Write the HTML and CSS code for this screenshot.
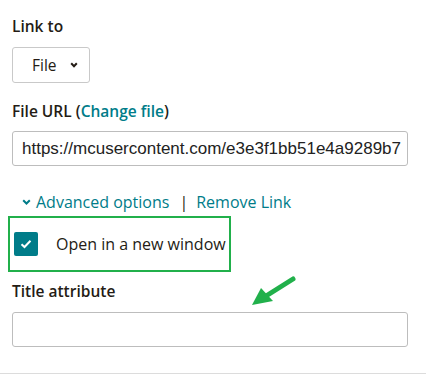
FILE: index.html
```html
<!DOCTYPE html>
<html lang="en">

<head>
    <meta charset="UTF-8">
    <meta name="viewport" content="width=device-width, initial-scale=1.0">
    <title>Link settings</title>
    <link rel="stylesheet" href="styles.css">
</head>

<body>
    <div class="panel">
        <!-- link type -->
        <div class="field">
            <div class="label">Link to</div>
            <button class="select-btn">File
                <svg class="chev" width="8" height="6" viewBox="0 0 8 6">
                    <path d="M1.2 1.2 L4 4.2 L6.8 1.2" fill="none" stroke="#241c15" stroke-width="2" />
                </svg>
            </button>
        </div>

        <!-- file url -->
        <div class="field">
            <div class="label">File URL (<a class="link" href="#">Change file</a>)</div>
            <div class="text-input url">https://mcusercontent.com/e3e3f1bb51e4a9289b7</div>
        </div>

        <!-- advanced -->
        <div class="adv-row">
            <svg class="chev small" width="9" height="6" viewBox="0 0 9 6">
                <path d="M1.2 1.2 L4.5 4.5 L7.8 1.2" fill="none" stroke="#007c89" stroke-width="2" />
            </svg>
            <a class="link" href="#">Advanced options</a>
            <span class="sep">|</span>
            <a class="link" href="#">Remove Link</a>
        </div>

        <div class="highlight">
            <span class="checkbox">
                <svg width="12" height="10" viewBox="0 0 12 10">
                    <path d="M1.5 5.2 L4.5 8 L10.5 1.8" fill="none" stroke="#fff" stroke-width="2" />
                </svg>
            </span>
            <span class="check-label">Open in a new window</span>
        </div>

        <div class="field title-field">
            <div class="label">Title attribute</div>
            <div class="text-input blank"></div>
            <svg class="arrow" width="50" height="34" viewBox="0 0 50 34">
                <path d="M44 5 L17 22" stroke="#21b04b" stroke-width="5" stroke-linecap="round" />
                <path d="M3 31 L12 14 L24 27 Z" fill="#21b04b" />
            </svg>
        </div>
    </div>
    <div class="rule"></div>
</body>

</html>
```

FILE: styles.css
```css
/* base */
body {
    margin: 0;
    padding: 0;
    background-color: #fff;
    color: #241c15;
    font-family: "Open Sans", "Liberation Sans", sans-serif;
}

.panel {
    padding: 16px 18px 0 12px;
}

.field {
    margin-bottom: 18px;
}

.label {
    font-size: 15.5px;
    font-weight: 600;
    line-height: 20px;
    margin-bottom: 10px;
}

.field:first-child .label {
    margin-bottom: 11px;
}

.link {
    color: #007c89;
    text-decoration: none;
}

/* select button */
.select-btn {
    display: flex;
    align-items: center;
    gap: 13px;
    width: 78px;
    height: 36px;
    padding: 0 0 0 19px;
    border: 1px solid #c9c9c9;
    border-radius: 3px;
    background-color: #fff;
    color: #241c15;
    font-family: "Open Sans", "Liberation Sans", sans-serif;
    font-size: 15.5px;
}

/* inputs */
.text-input {
    height: 33px;
    border: 1px solid #bdbdbd;
    border-radius: 3px;
    box-sizing: content-box;
}

.url {
    padding: 0 0 0 9px;
    font-family: "Liberation Sans", Arial, sans-serif;
    font-size: 17px;
    line-height: 33px;
    white-space: nowrap;
    overflow: hidden;
    color: #222;
}

/* advanced row */
.adv-row {
    display: flex;
    align-items: center;
    padding-left: 10px;
    font-size: 16px;
    line-height: 20px;
    margin-top: 26px;
}

.adv-row .chev {
    margin-right: 5px;
}

.sep {
    margin: 0 8px 0 10px;
    color: #241c15;
}

/* highlighted checkbox */
.highlight {
    display: flex;
    align-items: center;
    width: 223px;
    height: 56px;
    margin: 4px 0 0 -4px;
    padding-left: 4px;
    border: 2px solid #21b04b;
    box-sizing: border-box;
}

.checkbox {
    display: flex;
    align-items: center;
    justify-content: center;
    width: 24px;
    height: 24px;
    border-radius: 2px;
    background-color: #007c89;
}

.check-label {
    margin-left: 18px;
    font-size: 16px;
}

.title-field {
    position: relative;
    margin-top: 9px;
}

.title-field .label {
    margin-bottom: 11px;
}

.arrow {
    position: absolute;
    left: 237px;
    top: -7px;
}

.rule {
    margin-top: 26px;
    border-top: 1px solid #dcdcdc;
}
```
